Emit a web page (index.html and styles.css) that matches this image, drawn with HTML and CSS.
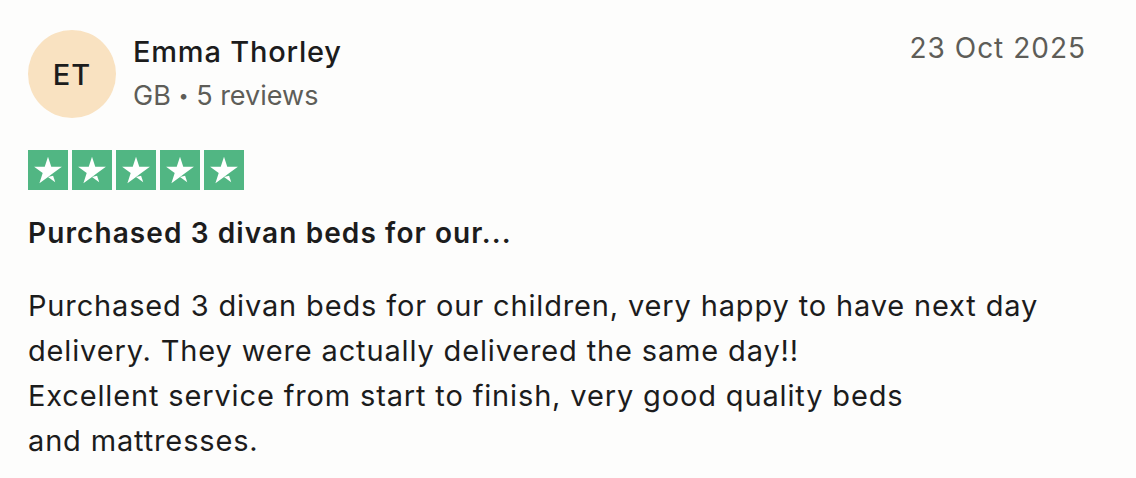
FILE: index.html
```html
<!DOCTYPE html>
<html lang="en">

<head>
    <meta charset="UTF-8">
    <meta name="viewport" content="width=device-width, initial-scale=1.0">
    <title>Review</title>
    <link rel="stylesheet" href="styles.css">
</head>

<body>

    <article class="review">
        <header class="review-head">
            <div class="avatar">ET</div>
            <div class="reviewer">
                <div class="reviewer-name">Emma Thorley</div>
                <div class="reviewer-meta">GB <span class="dot">•</span> 5 reviews</div>
            </div>
            <time class="review-date">23 Oct 2025</time>
        </header>

        <div class="stars">
            <span class="star"><svg viewBox="0 0 24 24"><path d="M12 2.6l2.3 7.1h7.5l-6.06 4.4-2.34 1.7L12 16.9l-6.06 4.4 2.32-7.12L2.2 9.7h7.5z"/><path d="M12 16.9l3.6-.92 1.5 4.7z"/></svg></span>
            <span class="star"><svg viewBox="0 0 24 24"><path d="M12 2.6l2.3 7.1h7.5l-6.06 4.4-2.34 1.7L12 16.9l-6.06 4.4 2.32-7.12L2.2 9.7h7.5z"/><path d="M12 16.9l3.6-.92 1.5 4.7z"/></svg></span>
            <span class="star"><svg viewBox="0 0 24 24"><path d="M12 2.6l2.3 7.1h7.5l-6.06 4.4-2.34 1.7L12 16.9l-6.06 4.4 2.32-7.12L2.2 9.7h7.5z"/><path d="M12 16.9l3.6-.92 1.5 4.7z"/></svg></span>
            <span class="star"><svg viewBox="0 0 24 24"><path d="M12 2.6l2.3 7.1h7.5l-6.06 4.4-2.34 1.7L12 16.9l-6.06 4.4 2.32-7.12L2.2 9.7h7.5z"/><path d="M12 16.9l3.6-.92 1.5 4.7z"/></svg></span>
            <span class="star"><svg viewBox="0 0 24 24"><path d="M12 2.6l2.3 7.1h7.5l-6.06 4.4-2.34 1.7L12 16.9l-6.06 4.4 2.32-7.12L2.2 9.7h7.5z"/><path d="M12 16.9l3.6-.92 1.5 4.7z"/></svg></span>
        </div>

        <h2 class="review-title">Purchased 3 divan beds for our...</h2>

        <p class="review-text">Purchased 3 divan beds for our children, very happy to have next day<br>delivery. They were actually delivered the same day!!<br>Excellent service from start to finish, very good quality beds<br>and mattresses.</p>
    </article>

</body>

</html>
```

FILE: styles.css
```css
* {
    margin: 0;
    padding: 0;
    box-sizing: border-box;
}

body {
    background: #fdfdfc;
    font-family: Inter, "Noto Sans", sans-serif;
    color: #1c1c1c;
}

.review {
    width: 1086px;
    padding: 30px 0 0 28px;
}

/* 头部：头像 + 名字 + 日期 */
.review-head {
    display: flex;
    align-items: flex-start;
}

.avatar {
    width: 88px;
    height: 88px;
    border-radius: 50%;
    background: #f9e2c1;
    display: flex;
    align-items: center;
    justify-content: center;
    font-size: 29px;
    font-weight: 500;
    letter-spacing: 1px;
    flex-shrink: 0;
}

.reviewer {
    flex: 1;
    margin-left: 17px;
    padding-top: 4px;
}

.reviewer-name {
    font-size: 29px;
    font-weight: 500;
    line-height: 36px;
    letter-spacing: 0.8px;
}

.reviewer-meta {
    font-size: 27px;
    color: #5e5d58;
    line-height: 34px;
    margin-top: 9px;
}

.reviewer-meta .dot {
    font-size: 18px;
    vertical-align: 3px;
}

.review-date {
    font-size: 28px;
    color: #5e5d58;
    line-height: 36px;
    letter-spacing: 1px;
}

/* 星星评分 */
.stars {
    display: flex;
    gap: 4px;
    margin-top: 32px;
}

.star {
    width: 40px;
    height: 40px;
    background: #51b683;
    display: flex;
    align-items: center;
    justify-content: center;
}

.star svg {
    width: 34px;
    height: 34px;
    fill: #fff;
}

.review-title {
    font-size: 28px;
    font-weight: 600;
    line-height: 34px;
    letter-spacing: 1.1px;
    margin-top: 26px;
}

.review-text {
    font-size: 29px;
    line-height: 45px;
    letter-spacing: 0.85px;
    margin-top: 33px;
}
```
